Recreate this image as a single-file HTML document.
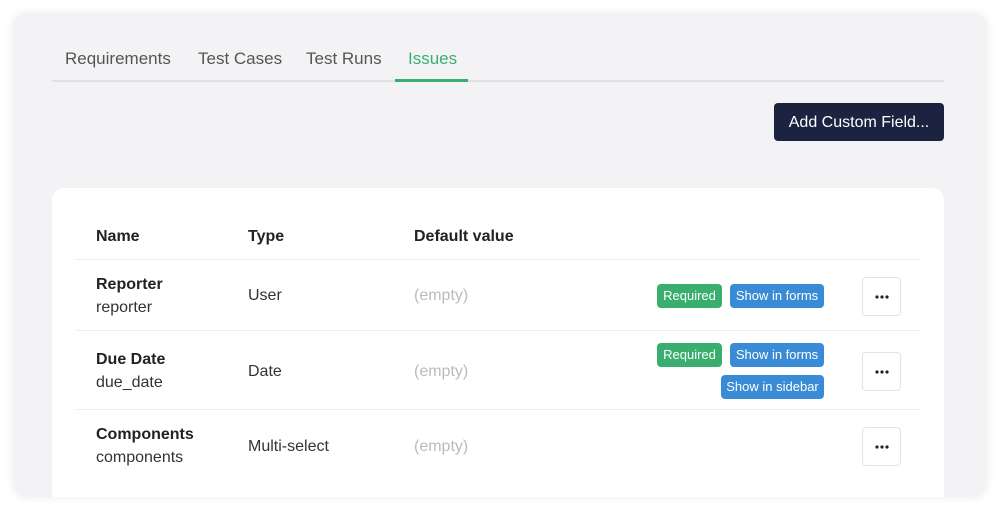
<!DOCTYPE html>
<html><head><style>
*{margin:0;padding:0;box-sizing:border-box}
body{width:1000px;height:511px;background:#fff;font-family:"Liberation Sans",sans-serif;position:relative;overflow:hidden}
.outer{position:absolute;left:13px;top:13px;width:974px;height:484px;background:#f3f3f5;border-radius:14px;box-shadow:0 0 10px rgba(0,0,0,.08);overflow:hidden}
.tabs{position:absolute;left:39px;top:0;width:892px;height:69px;border-bottom:2px solid #e1e1e4}
.tab{position:absolute;top:36px;font-size:17px;color:#555}
.btn{position:absolute;left:761px;top:90px;width:170px;height:38px;background:#1b2340;color:#fff;border-radius:4px;font-size:16px;text-align:center;line-height:39px}
.card{position:absolute;left:39px;top:175px;width:892px;height:320px;background:#fff;border-radius:12px}
.t{position:absolute;font-size:16px;color:#333}
.b{font-weight:bold;color:#222}
.e{color:#bbb}
.line{position:absolute;left:24px;width:844px;height:1px;background:#ececec}
.badge{position:absolute;height:24px;line-height:24px;border-radius:4px;color:#fff;font-size:13px;text-align:center}
.g{background:#3aae6e}.bl{background:#3a8bd6}
.dots{position:absolute;left:810px;width:39px;height:39px;border:1px solid #e3e3e3;border-radius:4px;display:flex;align-items:center;justify-content:center}
</style></head><body>
<div class="outer">
 <div class="tabs">
  <div class="tab" style="left:13px">Requirements</div>
  <div class="tab" style="left:146px">Test Cases</div>
  <div class="tab" style="left:254px">Test Runs</div>
  <div class="tab" style="left:356px;color:#3aae6e">Issues</div>
  <div style="position:absolute;left:343px;top:66px;width:73px;height:3px;background:#3aae6e"></div>
 </div>
 <div class="btn">Add Custom Field...</div>
 <div class="card">
  <div class="t b" style="left:44px;top:40px">Name</div>
  <div class="t b" style="left:196px;top:40px">Type</div>
  <div class="t b" style="left:362px;top:40px">Default value</div>
  <div class="line" style="top:71px"></div>
  <div class="t b" style="left:44px;top:88px">Reporter</div>
  <div class="t" style="left:44px;top:111px">reporter</div>
  <div class="t" style="left:196px;top:99px">User</div>
  <div class="t e" style="left:362px;top:99px">(empty)</div>
  <div class="badge g" style="left:605px;top:96px;width:65px">Required</div>
  <div class="badge bl" style="left:678px;top:96px;width:94px">Show in forms</div>
  <div class="dots" style="left:810px;top:89px"><svg width="14" height="4"><circle cx="2" cy="2" r="1.6" fill="#222"/><circle cx="7" cy="2" r="1.6" fill="#222"/><circle cx="12" cy="2" r="1.6" fill="#222"/></svg></div>
  <div class="line" style="top:142px"></div>
  <div class="t b" style="left:44px;top:163px">Due Date</div>
  <div class="t" style="left:44px;top:186px">due_date</div>
  <div class="t" style="left:196px;top:175px">Date</div>
  <div class="t e" style="left:362px;top:175px">(empty)</div>
  <div class="badge g" style="left:605px;top:155px;width:65px">Required</div>
  <div class="badge bl" style="left:678px;top:155px;width:94px">Show in forms</div>
  <div class="badge bl" style="left:669px;top:187px;width:103px">Show in sidebar</div>
  <div class="dots" style="left:810px;top:164px"><svg width="14" height="4"><circle cx="2" cy="2" r="1.6" fill="#222"/><circle cx="7" cy="2" r="1.6" fill="#222"/><circle cx="12" cy="2" r="1.6" fill="#222"/></svg></div>
  <div class="line" style="top:221px"></div>
  <div class="t b" style="left:44px;top:238px">Components</div>
  <div class="t" style="left:44px;top:261px">components</div>
  <div class="t" style="left:196px;top:250px">Multi-select</div>
  <div class="t e" style="left:362px;top:250px">(empty)</div>
  <div class="dots" style="left:810px;top:239px"><svg width="14" height="4"><circle cx="2" cy="2" r="1.6" fill="#222"/><circle cx="7" cy="2" r="1.6" fill="#222"/><circle cx="12" cy="2" r="1.6" fill="#222"/></svg></div>
 </div>
</div>
</body></html>
